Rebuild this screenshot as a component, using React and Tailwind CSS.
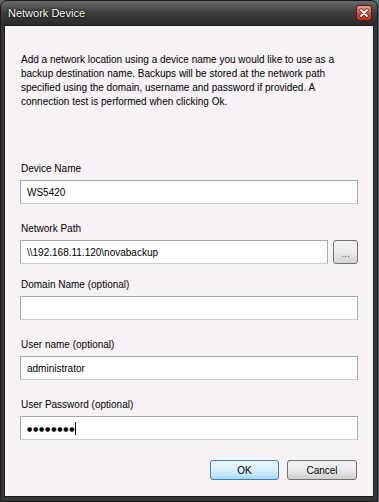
import React from 'react';

const font = { fontFamily: '"Liberation Sans", Arial, sans-serif' };

function Field({ label, children, className = '' }) {
  return (
    <div className={`flex flex-col ${className}`}>
      <div className="h-[14px] leading-[14px] text-[10px] text-black pl-[1px]">{label}</div>
      <div className="mt-[4px] flex gap-[5px]">{children}</div>
    </div>
  );
}

function TextBox({ value, className = '', children }) {
  return (
    <div
      className={`h-[24px] flex-1 flex items-center bg-white border border-[#a4a7ae] border-b-[#c9cdd4] pl-[6px] text-[10px] text-black ${className}`}
    >
      {children ?? value}
    </div>
  );
}

export default function App() {
  return (
    <div className="w-[379px] h-[502px] bg-[#5b6b70] overflow-hidden" style={font}>
      <div className="w-[378px] h-[502px] rounded-t-[7px] bg-[#363636] border border-[#1b1b1b] flex flex-col">
        {/* Title bar */}
        <div className="h-[24px] shrink-0 rounded-t-[6px] bg-gradient-to-b from-[#6a6a6a] via-[#3e3e3e] to-[#2a2a2a] flex items-center justify-between pl-[7px] pr-[5px]">
          <span className="text-[11px] text-white [text-shadow:0_0_3px_#000,0_0_1px_#000]">Network Device</span>
          <div className="w-[16px] h-[16px] rounded-[3px] border border-[#4a1a12] bg-gradient-to-b from-[#eaa08c] via-[#d0553b] to-[#b8341c] flex items-center justify-center mb-[1px]">
            <svg width="10" height="10" viewBox="0 0 10 10">
              <path d="M2 2 L8 8 M8 2 L2 8" stroke="#5a1a10" strokeWidth="3.2" strokeLinecap="round" />
              <path d="M2 2 L8 8 M8 2 L2 8" stroke="#ffffff" strokeWidth="1.8" strokeLinecap="round" />
            </svg>
          </div>
        </div>

        {/* Client area */}
        <div className="flex-1 mx-[3px] mb-[4px] bg-[#f6f2f6] border border-[#1e1e1e] flex flex-col px-[15px] pt-[27px]">
          <p className="text-[10px] leading-[14px] text-black pl-[1px]">
            Add a network location using a device name you would like to use as a backup destination name. Backups will be
            stored at the network path specified using the domain, username and password if provided. A connection test is
            performed when clicking Ok.
          </p>

          <Field label="Device Name" className="mt-[53px]">
            <TextBox value="WS5420" />
          </Field>

          <Field label="Network Path" className="mt-[18px]">
            <TextBox value="\\192.168.11.120\novabackup" />
            <button className="w-[25px] h-[24px] rounded-[3px] border border-[#707070] bg-gradient-to-b from-[#f2f2f2] via-[#ebebeb] to-[#d4d4d4] flex items-end justify-center pb-[4px] text-[10px] leading-[10px] text-[#4a4a7a]">
              ...
            </button>
          </Field>

          <Field label="Domain Name (optional)" className="mt-[14px]">
            <TextBox value="" />
          </Field>

          <Field label="User name (optional)" className="mt-[18px]">
            <TextBox value="administrator" />
          </Field>

          <Field label="User Password (optional)" className="mt-[18px]">
            <TextBox>
              <span className="text-[6px] tracking-[0.8px] text-black" style={{ fontFamily: '"DejaVu Sans", sans-serif' }}>
                ●●●●●●●●
              </span>
              <span className="w-[1px] h-[13px] bg-black" />
            </TextBox>
          </Field>

          <div className="mt-[20px] flex justify-end gap-[8px] pr-[1px]">
            <button className="w-[69px] h-[20px] rounded-[3px] border border-[#3c7fb1] bg-gradient-to-b from-[#eaf6fd] via-[#d9f0fc] to-[#a7d9f5] text-[10px] text-black">
              OK
            </button>
            <button className="w-[70px] h-[20px] rounded-[3px] border border-[#707070] bg-gradient-to-b from-[#f2f2f2] via-[#ebebeb] to-[#cfcfcf] text-[10px] text-black">
              Cancel
            </button>
          </div>
        </div>
      </div>
    </div>
  );
}
